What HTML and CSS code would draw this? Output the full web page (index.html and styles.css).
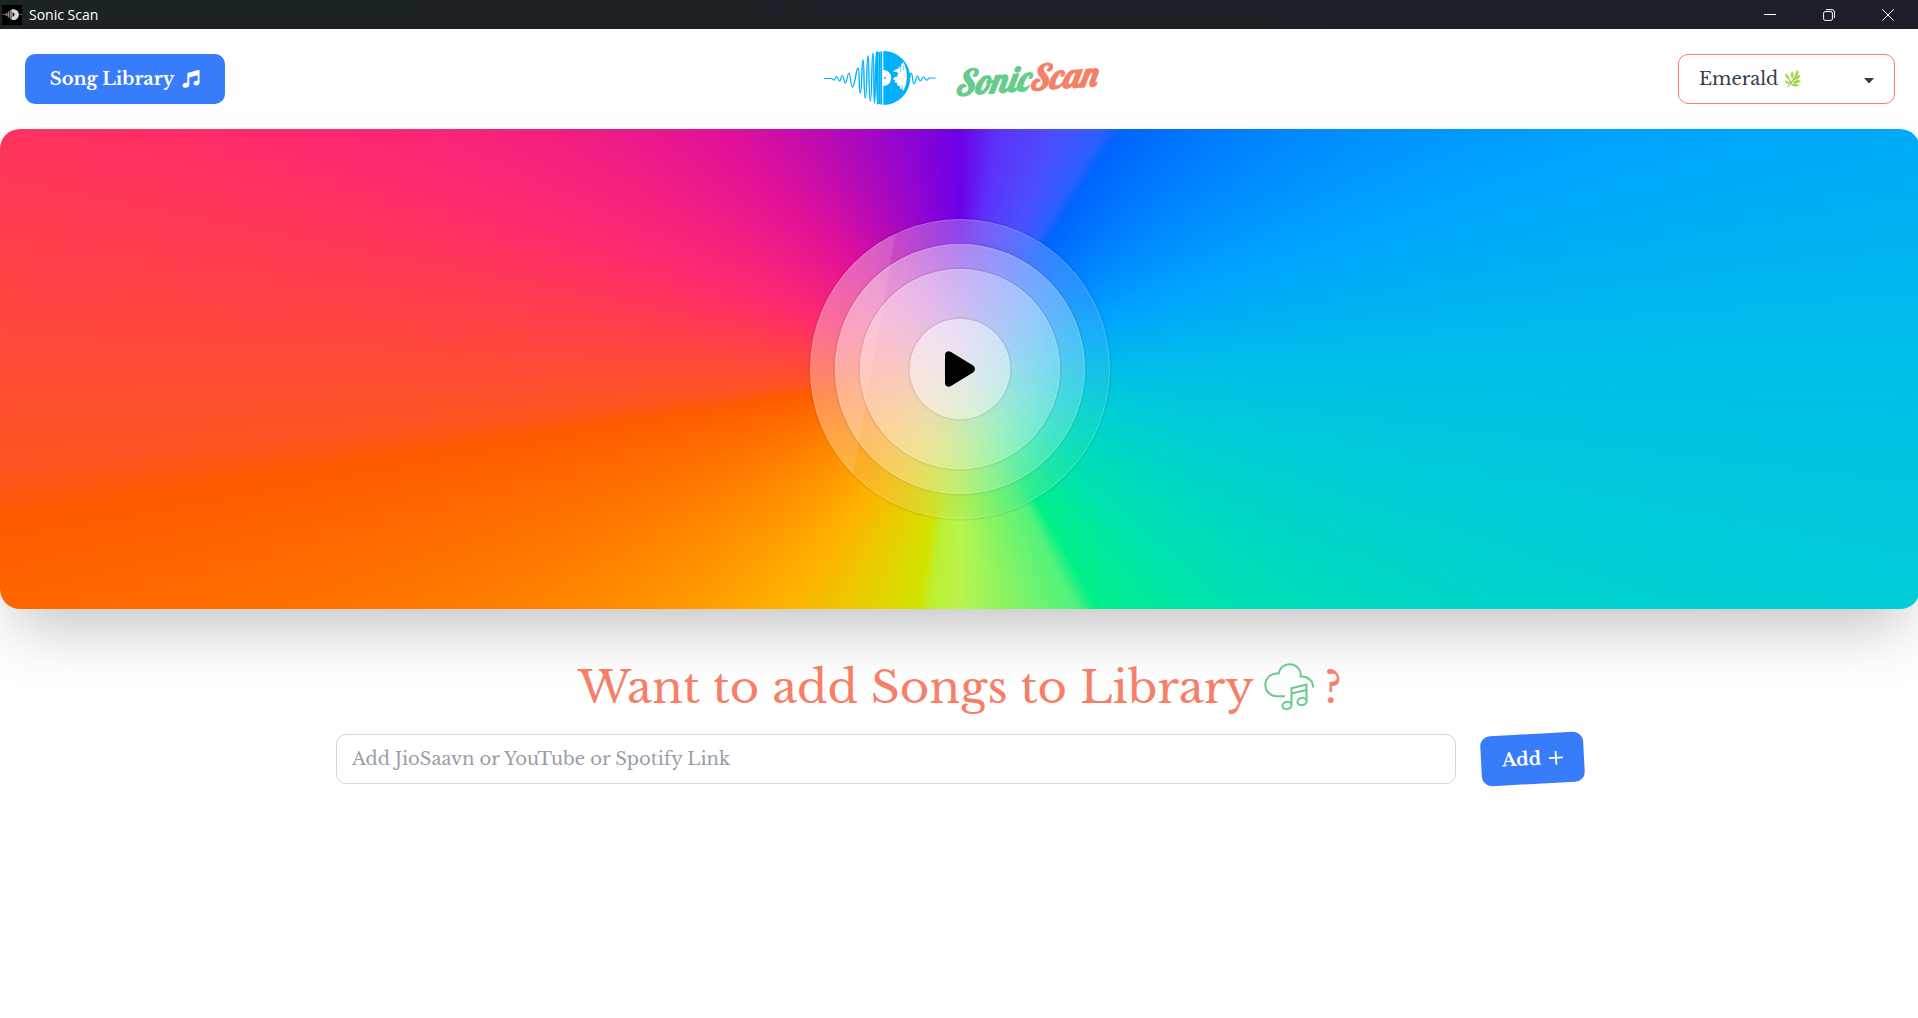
FILE: index.html
```
<!DOCTYPE html>
<html lang="en">
<head>
<meta charset="utf-8">
<meta name="viewport" content="width=device-width, initial-scale=1">
<title>Sonic Scan</title>
<link rel="stylesheet" href="styles.css">
</head>
<body>
<div class="titlebar">
  <svg class="app-icon" viewBox="0 0 20 20" aria-hidden="true">
    <rect width="20" height="20" fill="#000"/>
    <path d="M0 9.500h20" stroke="#555" stroke-width="1"/>
    <path d="M4.500 8v3M6.500 6.500v6M8.500 5v9" stroke="#888" stroke-width="1.400"/>
    <path d="M9.500 4.200h2a5.400 5.400 0 0 1 0 10.800h-2z" fill="#d8d8d8"/>
    <path d="M10.500 7.500a2 2 0 0 1 0 4.200z" fill="#111"/>
  </svg>
  <span class="app-name">Sonic Scan</span>
  <div class="window-controls">
    <button class="window-button" type="button" aria-label="Minimize"><svg viewBox="0 0 12 12"><path d="M0 5.500h12"/></svg></button>
    <button class="window-button" type="button" aria-label="Restore"><svg viewBox="0 0 12 12"><rect x=".6" y="2.600" width="8.800" height="8.800" rx="1.500"/><path d="M3 .6h6a2.400 2.400 0 0 1 2.400 2.400v6"/></svg></button>
    <button class="window-button" type="button" aria-label="Close"><svg viewBox="0 0 12 12"><path d="M.3.300l11.400 11.400M11.700.3L.3 11.700"/></svg></button>
  </div>
</div>

<header class="navbar">
  <div class="navbar-start">
    <button class="btn btn-library" type="button">Song Library
      <svg class="note-icon" viewBox="0 0 18 18" aria-hidden="true"><path d="M17.500.200v12.600c0 1.500-1.500 2.700-3.200 2.700s-2.800-.9-2.800-2.200c0-1.500 1.500-2.500 3.100-2.500.4 0 .8.100 1.100.2V5.200L7.300 7.500v7.300c0 1.700-1.600 3-3.600 3C2 17.800.600 16.900.600 15.400c0-1.500 1.500-2.600 3.300-2.600.5 0 1 .1 1.400.2V4.200c0-.7.400-1.200 1-1.400L16.200.100c.7-.2 1.300-.2 1.300.1z" fill="#fff"/></svg>
    </button>
  </div>

  <a class="brand" href="#" aria-label="SonicScan">
    <svg class="brand-mark" viewBox="0 0 112 56" aria-hidden="true">
      <g fill="none" stroke="#00b0fb" stroke-linecap="round" stroke-linejoin="round">
        <path stroke-width="1.200" d="M.5 28.500H7C8.500 28.500 8.500 30 10 30S11.500 26.500 12.800 26.500 14 31 15.500 31 16.800 25.500 18.300 25.500 19.800 33 21.300 33 23.500 23 25 23 26.500 37 28.500 37"/>
        <path stroke-width="1.400" d="M28.500 37C31 37 32 18 34 18S34.500 43 36.300 43 37.500 10 39 10 39.500 48 41.300 48 42.500 6 44 6 44.500 51 46.300 51 47.500 3 49 3 49.300 53 50.500 53 51.500 2 52.300 2 52.600 54 53.500 54V2"/>
        <path stroke-width="1.800" d="M55.200 2v52M57.200 1.500v53" stroke-linecap="butt"/>
        <path stroke-width="1.200" d="M85 29C86 29 86 23 87.300 23S88.300 34 90 34 91.800 26 93.300 26 94.800 31 96.300 31 98 27 99.500 27 101 30.200 102.500 30.200 104 28 105.500 28H111"/>
      </g>
      <path fill="#00b0fb" d="M59.300 1a27 27 0 0 1 0 54V36a8 8 0 0 0 0-16z"/>
      <circle cx="61" cy="28" r="1" fill="#00b0fb"/>
      <path fill="#fff" d="M69 22l3-.5-1-2 4-1-.5-2 2.500.5.5-4 1.500 1 .5-2.500 1.500 4.500 1.500 5 .3 7-1 7-2 5-1 1-1-2.500-1.500.5-.5-3-2.500-.5 0-2.500-3-1 1-2-2.500-.5 2-2.500 3-.5-.5-2 1.500-1-3-2 1-1.500-3 .5z"/>
      <path stroke="#00b0fb" stroke-width=".6" fill="none" d="M76 17l.5 5M79 15l.5 5M78 35l.5 5"/>
    </svg>
    <span class="wordmark"><span class="wordmark-sonic">Sonic</span><span class="wordmark-scan">Scan</span></span>
  </a>

  <div class="navbar-end">
    <div class="theme-picker">
      <select class="theme-select" aria-label="Theme"><option>Emerald</option></select>
      <svg class="leaf-icon" viewBox="0 0 16 18" aria-hidden="true">
        <path d="M2.500 17C6 14 9 9 12.500 3M5.500 13Q4.500 9 3 7M8 12.500q4-.5 6-1" fill="none" stroke="#7f9a3c" stroke-width="1"/>
        <g fill="#a6d94b"><path d="M.5 3.500q4 1.500 3.700 6Q-.5 8 .5 3.500zM7 1.500q3.500 3 .5 7.500Q4 5 7 1.500zM12.500 0q2.800 3-1.500 6.500Q9 3 12.500 0z"/><path d="M15.500 5q-1 5-6.500 5Q10 5 15.500 5zM16 11q-4 4-8.500 1.500Q11.500 8.500 16 11zM14.500 15.500q-5 2.500-9-1Q10.500 12 14.500 15.500zM0 10.200q4 .5 4.800 4-4.500.5-4.800-4z"/></g>
      </svg>
      <svg class="caret-icon" viewBox="0 0 10 5" aria-hidden="true"><path d="M0 0h10L6 4.500q-1 1-2 0z" fill="#333c4d"/></svg>
    </div>
  </div>
</header>

<main>
  <section class="hero">
    <div class="glass ring-outer">
      <div class="glass ring-middle">
        <div class="glass ring-inner">
          <button class="glass play" type="button" aria-label="Play">
            <svg viewBox="0 0 30 36" aria-hidden="true"><path d="M0 4C0 1 3 -.8 6 .900L28 14.500q4 3.500 0 7L6 35C3 36.800 0 35 0 32z"/></svg>
          </button>
        </div>
      </div>
    </div>
  </section>

  <section class="add-songs">
    <h1 class="title">Want to add Songs to Library
      <svg class="cloud-icon" viewBox="0 0 50 48" role="img" aria-label="music">
        <g fill="none" stroke="#66cc8a" stroke-width="2">
          <path d="M21 33.200H12.500A11.300 11.300 0 0 1 12.700 10.600Q14 10.500 14.500 10.600C15.500 5 20 1.200 25.500 1.200c7 0 12 5.800 11.200 12.400C44 13 49.200 18 49.200 24.500"/>
          <path d="M27.500 42V25.200L42.500 21.500V38M27.500 30.500L42.500 27"/>
          <ellipse cx="23" cy="42.500" rx="4.600" ry="3.600" transform="rotate(-12 23 42.500)"/>
          <ellipse cx="38" cy="38.500" rx="4.600" ry="3.600" transform="rotate(-12 38 38.500)"/>
        </g>
      </svg>
      ?</h1>
    <form class="add-form">
      <input class="link-input" type="text" placeholder="Add JioSaavn or YouTube or Spotify Link" aria-label="Song link">
      <button class="btn btn-add" type="button">Add
        <svg class="plus-icon" viewBox="0 0 14 14" aria-hidden="true"><path d="M7 0v14M0 7h14" stroke="#fff" stroke-width="1.800"/></svg>
      </button>
    </form>
  </section>
</main>
</body>
</html>
```

FILE: styles.css
```
* {
  box-sizing: border-box;
}

body {
  margin: 0;
  min-height: 100vh;
  overflow-x: hidden;
  background: #fff;
  color: #333c4d;
  font-family: "Libre Baskerville", "Liberation Serif", serif;
  font-size: 18px;
}

button {
  font-family: inherit;
  cursor: pointer;
}

/* Window title bar */
.titlebar {
  display: flex;
  align-items: center;
  height: 29px;
  padding: 0 1px 0 2px;
  background: linear-gradient(90deg, #1b2325, #1e1f29);
  color: #fff;
}

.app-icon {
  width: 20px;
  height: 20px;
  margin-right: 7px;
}

.app-name {
  font: 14px/20px "Segoe UI", "Open Sans", sans-serif;
}

.window-controls {
  display: flex;
  margin-left: auto;
}

.window-button {
  display: grid;
  place-items: center;
  width: 59px;
  height: 29px;
  padding: 0;
  border: 0;
  background: none;
}

.window-button svg {
  width: 12px;
  height: 12px;
  fill: none;
  stroke: #fff;
  stroke-width: 1;
}

/* Navigation */
.navbar {
  display: grid;
  grid-template-columns: 1fr auto 1fr;
  align-items: center;
  height: 100px;
  padding: 0 23px 0 25px;
}

.navbar-end {
  display: flex;
  justify-content: flex-end;
}

.btn {
  display: inline-flex;
  align-items: center;
  justify-content: center;
  gap: 8px;
  height: 50px;
  border: 0;
  border-radius: 10px;
  background: #377cfb;
  color: #fff;
  font-size: 18px;
  font-weight: 700;
  white-space: nowrap;
}

.btn-library {
  width: 200px;
}

.note-icon {
  width: 18px;
  height: 18px;
}

.brand {
  display: flex;
  align-items: center;
  gap: 18px;
  padding-bottom: 2px;
  text-decoration: none;
}

.brand-mark {
  width: 112px;
  height: 56px;
}

.wordmark {
  font: italic 900 35px/48px "Lobster", "Lato", sans-serif;
  transform: rotate(-4deg);
}

.wordmark-sonic {
  color: #66cc8a;
}

.wordmark-scan {
  color: #f68067;
}

.theme-picker {
  position: relative;
}

.theme-select {
  appearance: none;
  width: 217px;
  height: 50px;
  padding: 0 50px 0 20px;
  border: 1px solid #f68067;
  border-radius: 10px;
  background: #fff;
  color: #333c4d;
  font-family: inherit;
  font-size: 18px;
}

.leaf-icon {
  position: absolute;
  top: 16px;
  left: 107px;
  width: 16px;
  height: 18px;
}

.caret-icon {
  position: absolute;
  top: 24px;
  right: 21px;
  width: 10px;
  height: 5px;
}

/* The panel runs slightly past the right edge of the window */
main {
  margin-right: -2px;
}

/* Listening panel */
.hero {
  display: grid;
  place-items: center;
  height: 480px;
  border-radius: 20px;
  background: conic-gradient(
    #6d00e8 0deg,
    #5c32fa 9deg,
    #4a50ff 23deg,
    #2a60ff 31deg,
    #0064ff 34deg,
    #00a2ff 70deg,
    #00bfe8 90deg,
    #00cdd8 104deg,
    #00e2b0 132deg,
    #00f088 150deg,
    #50f27c 154deg,
    #b9f54e 180deg,
    #bcef30 187deg,
    #d2e400 190deg,
    #ffb300 216deg,
    #ff5c00 261deg,
    #ff5522 264deg,
    #ff2a6e 289deg,
    #e0109a 315deg,
    #6d00e8 360deg
  );
  box-shadow: 0 31px 62px -15px rgba(0, 0, 0, .25);
}

.glass {
  display: grid;
  place-items: center;
  border: 0;
  border-radius: 50%;
  background:
    linear-gradient(135deg, rgba(255, 255, 255, .3), rgba(255, 255, 255, .1));
  box-shadow:
    inset 0 0 0 1px rgba(255, 255, 255, .2),
    0 0 0 2px rgba(0, 0, 0, .05);
  backdrop-filter: blur(40px);
}

.ring-outer {
  width: 300px;
  height: 300px;
  background:
    linear-gradient(135deg, rgba(255, 255, 255, .3), rgba(255, 255, 255, 0)),
    linear-gradient(100deg, rgba(255, 255, 255, .1) 25%, rgba(255, 255, 255, 0) 25%);
}

.ring-middle {
  width: 250px;
  height: 250px;
}

.ring-inner {
  width: 200px;
  height: 200px;
}

.play {
  width: 100px;
  height: 100px;
  padding: 0;
  background: linear-gradient(135deg, rgba(255, 255, 255, .5), rgba(255, 255, 255, .3));
}

.play svg {
  width: 30px;
  height: 36px;
  fill: #000;
}

/* Add songs */
.add-songs {
  display: flex;
  flex-direction: column;
  align-items: center;
  padding-top: 46px;
}

.title {
  display: flex;
  align-items: center;
  gap: 10px;
  margin: 0;
  color: #f68067;
  font-size: 45px;
  font-weight: 400;
  line-height: 64px;
  white-space: nowrap;
}

.cloud-icon {
  width: 50px;
  height: 48px;
}

.add-form {
  display: flex;
  gap: 25px;
  width: 65%;
  margin-top: 15px;
}

.link-input {
  flex: 1;
  min-width: 0;
  height: 50px;
  padding: 0 15px;
  border: 1px solid #d6d8db;
  border-radius: 10px;
  background: #fff;
  color: #333c4d;
  font-family: inherit;
  font-size: 18px;
}

.link-input::placeholder {
  color: #999ea6;
}

.btn-add {
  width: 103px;
  transform: rotate(-3deg);
}

.plus-icon {
  width: 14px;
  height: 14px;
}
```
